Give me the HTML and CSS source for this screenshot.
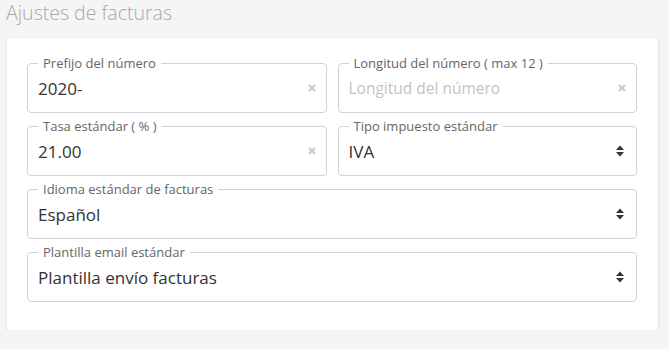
FILE: index.html
```html
<!DOCTYPE html>
<html lang="es">
<head>
    <meta charset="UTF-8">
    <meta name="viewport" content="width=device-width, initial-scale=1.0">
    <title>Ajustes de facturas</title>
    <link rel="stylesheet" href="styles.css">
</head>
<body>
    <h2 class="title">Ajustes de facturas</h2>
    <div class="card">
        <div class="grid">
            <fieldset class="field">
                <legend>Prefijo del número</legend>
                <div class="row">
                    <span class="value">2020-</span>
                    <svg class="clear" width="8" height="8" viewBox="0 0 8 8"><path d="M1 1 L7 7 M7 1 L1 7" stroke="#c8c8c8" stroke-width="2"/></svg>
                </div>
            </fieldset>
            <fieldset class="field">
                <legend>Longitud del número ( max 12 )</legend>
                <div class="row">
                    <span class="value placeholder">Longitud del número</span>
                    <svg class="clear" width="8" height="8" viewBox="0 0 8 8"><path d="M1 1 L7 7 M7 1 L1 7" stroke="#c8c8c8" stroke-width="2"/></svg>
                </div>
            </fieldset>
            <fieldset class="field">
                <legend>Tasa estándar ( % )</legend>
                <div class="row">
                    <span class="value">21.00</span>
                    <svg class="clear" width="8" height="8" viewBox="0 0 8 8"><path d="M1 1 L7 7 M7 1 L1 7" stroke="#c8c8c8" stroke-width="2"/></svg>
                </div>
            </fieldset>
            <fieldset class="field select">
                <legend>Tipo impuesto estándar</legend>
                <div class="row">
                    <span class="value">IVA</span>
                    <svg class="arrows" width="8" height="12" viewBox="0 0 8 12"><path d="M4 0.5 L8 5 H0 Z M0 7 H8 L4 11.5 Z" fill="#333"/></svg>
                </div>
            </fieldset>
            <fieldset class="field select wide">
                <legend>Idioma estándar de facturas</legend>
                <div class="row">
                    <span class="value">Español</span>
                    <svg class="arrows" width="8" height="12" viewBox="0 0 8 12"><path d="M4 0.5 L8 5 H0 Z M0 7 H8 L4 11.5 Z" fill="#333"/></svg>
                </div>
            </fieldset>
            <fieldset class="field select wide">
                <legend>Plantilla email estándar</legend>
                <div class="row">
                    <span class="value">Plantilla envío facturas</span>
                    <svg class="arrows" width="8" height="12" viewBox="0 0 8 12"><path d="M4 0.5 L8 5 H0 Z M0 7 H8 L4 11.5 Z" fill="#333"/></svg>
                </div>
            </fieldset>
        </div>
    </div>
</body>
</html>
```
FILE: styles.css
```css
body {
    margin: 0;
    padding: 0 0 0 6px;
    background: #f5f5f5;
    font-family: "Open Sans", "DejaVu Sans", sans-serif;
    color: #333;
}
.title {
    margin: 0;
    height: 38px;
    font-size: 19.5px;
    font-weight: 300;
    line-height: 26.5px;
    color: #a9a9a9;
}
.card {
    box-sizing: border-box;
    margin-left: 1px;
    width: 651px;
    padding: 17px 21px 28px 20px;
    background: #fff;
    border-radius: 3px;
    box-shadow: 0 1px 3px rgba(0, 0, 0, .15);
}
.grid {
    display: grid;
    grid-template-columns: 1fr 1fr;
    column-gap: 11px;
    row-gap: 5px;
}
.field {
    margin: 0;
    min-width: 0;
    padding: 0 10px 7px 10px;
    border: 1px solid #cfd3d8;
    border-radius: 4px;
}
.field.wide {
    grid-column: 1 / 3;
}
.field legend {
    padding: 0 5px;
    font-size: 13px;
    line-height: 16px;
    color: #666;
}
.row {
    display: flex;
    align-items: center;
    height: 34px;
}
.value {
    flex: 1;
    font-size: 17px;
    color: #333;
}
.placeholder {
    font-size: 15.5px;
    color: #c4c4c4;
}
.clear {
    margin-right: 0;
}
.select .row {
    padding-right: 2px;
}
```
